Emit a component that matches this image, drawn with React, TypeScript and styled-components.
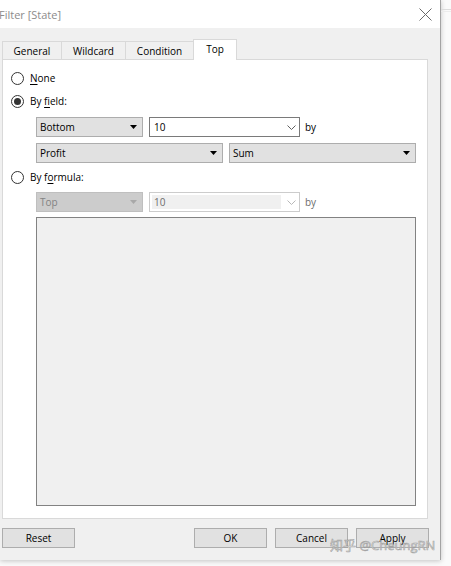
import { FC, ReactNode } from "react";
import styled, { createGlobalStyle, css } from "styled-components";

const GlobalStyle = createGlobalStyle`
  html, body {
    margin: 0;
    padding: 0;
  }
  body {
    background: #fafafa;
    font-family: "Open Sans", "Noto Sans", sans-serif;
    color: #000;
  }
`;

const Page = styled.div`
  position: relative;
  width: 451px;
  height: 566px;
  overflow: hidden;
  display: flex;
  flex-direction: row;
  align-items: flex-start;
`;

const Dialog = styled.div`
  box-sizing: border-box;
  width: 441px;
  height: 560px;
  display: flex;
  flex-direction: column;
  background: #f0f0f0;
  border-right: 1px solid #a3a3a3;
  box-shadow: 0 1px 5px rgba(0, 0, 0, 0.22);
  flex-shrink: 0;
`;

const Backdrop = styled.div`
  flex: 1;
  height: 100%;
  display: flex;
  flex-direction: column;
`;

const BackdropRule = styled.div`
  margin-top: 9px;
  height: 1px;
  border-top: 1px solid #dcdcdc;
  border-bottom: 1px solid #ececec;
`;

const TitleBar = styled.div`
  height: 28px;
  background: #fff;
  display: flex;
  align-items: center;
  justify-content: space-between;
  padding-right: 8px;
`;

const Title = styled.div`
  font-size: 11px;
  color: #8c8c8c;
  margin-left: -1px;
`;

const Body = styled.div`
  flex: 1;
  display: flex;
  flex-direction: column;
  padding: 11px 11px 0 2px;
`;

const TabStrip = styled.div`
  display: flex;
  align-items: flex-end;
  height: 21px;
  margin-bottom: -1px;
  position: relative;
  z-index: 1;
`;

const Tab = styled.div<{ active?: boolean; w: number }>`
  box-sizing: border-box;
  width: ${(p) => p.w}px;
  height: 19px;
  margin-left: -1px;
  display: flex;
  align-items: center;
  justify-content: center;
  font-size: 10px;
  background: #f0f0f0;
  border: 1px solid #d9d9d9;
  &:first-child {
    margin-left: 0;
  }
  ${(p) =>
    p.active &&
    css`
      height: 21px;
      background: #fff;
      border-bottom: none;
      padding-bottom: 2px;
      position: relative;
      z-index: 2;
    `}
`;

const Panel = styled.div`
  box-sizing: border-box;
  width: 426px;
  height: 460px;
  background: #fff;
  border: 1px solid #d9d9d9;
  padding: 10px 0 0 8px;
  display: flex;
  flex-direction: column;
`;

const RadioRow = styled.div<{ top: number }>`
  display: flex;
  align-items: center;
  gap: 6px;
  height: 16px;
  margin-top: ${(p) => p.top}px;
  font-size: 10px;
`;

const RadioCircle = styled.div<{ checked?: boolean }>`
  box-sizing: border-box;
  width: 13px;
  height: 13px;
  border-radius: 50%;
  border: 1px solid #333;
  background: #fff;
  display: flex;
  align-items: center;
  justify-content: center;
  &::after {
    content: "";
    width: 7px;
    height: 7px;
    border-radius: 50%;
    background: ${(p) => (p.checked ? "#333" : "transparent")};
  }
`;

const Key = styled.span`
  text-decoration: underline;
  text-underline-offset: 2px;
`;

const Indent = styled.div<{ top: number }>`
  margin-left: 25px;
  margin-top: ${(p) => p.top}px;
  display: flex;
  align-items: center;
  gap: 6px;
`;

const Combo = styled.div<{ w: number; disabled?: boolean }>`
  box-sizing: border-box;
  width: ${(p) => p.w}px;
  height: 20px;
  background: #e1e1e1;
  border: 1px solid #adadad;
  display: flex;
  align-items: center;
  justify-content: space-between;
  padding: 0 5px 0 3px;
  font-size: 10px;
  color: #000;
  ${(p) =>
    p.disabled &&
    css`
      background: #cccccc;
      border-color: #bfbfbf;
      color: #838383;
    `}
`;

const Edit = styled.div<{ w: number; disabled?: boolean }>`
  box-sizing: border-box;
  width: ${(p) => p.w}px;
  height: 20px;
  background: #fff;
  border: 1px solid ${(p) => (p.disabled ? "#cccccc" : "#7a7a7a")};
  display: flex;
  align-items: center;
  padding: 0 3px 0 2px;
  font-size: 10px;
  gap: 6px;
`;

const EditText = styled.div<{ disabled?: boolean }>`
  flex: 1;
  height: 14px;
  line-height: 14px;
  padding-left: 2px;
  background: ${(p) => (p.disabled ? "#f0f0f0" : "transparent")};
  color: ${(p) => (p.disabled ? "#6d6d6d" : "#000")};
`;

const By = styled.div<{ disabled?: boolean }>`
  font-size: 10px;
  margin-left: -1px;
  color: ${(p) => (p.disabled ? "#6d6d6d" : "#000")};
`;

const ListBox = styled.div`
  box-sizing: border-box;
  margin: 5px 0 0 25px;
  width: 380px;
  height: 289px;
  background: #f0f0f0;
  border: 1px solid #828282;
`;

const ButtonRow = styled.div`
  display: flex;
  align-items: center;
  gap: 8px;
  margin-top: 9px;
`;

const Spacer = styled.div`
  flex: 1;
`;

const Button = styled.div`
  box-sizing: border-box;
  width: 73px;
  height: 20px;
  background: #e1e1e1;
  border: 1px solid #adadad;
  display: flex;
  align-items: center;
  justify-content: center;
  font-size: 10px;
`;

const Watermark = styled.div`
  position: absolute;
  left: 330px;
  top: 535px;
  font-size: 13px;
  font-family: "Open Sans", "Noto Sans CJK SC", sans-serif;
  color: rgba(236, 236, 236, 0.9);
  -webkit-text-stroke: 0.6px rgba(130, 130, 130, 0.7);
  white-space: nowrap;
  pointer-events: none;
`;

const CloseIcon: FC = () => (
  <svg width="13" height="13" viewBox="0 0 13 13">
    <path d="M0.5 0.5 L12.5 12.5 M12.5 0.5 L0.5 12.5" stroke="#6a6a6a" strokeWidth="1" fill="none" />
  </svg>
);

const Triangle: FC<{ color?: string }> = ({ color = "#000" }) => (
  <svg width="7" height="4" viewBox="0 0 7 4">
    <path d="M0 0 H7 L3.5 4 Z" fill={color} />
  </svg>
);

const Chevron: FC<{ color?: string }> = ({ color = "#606060" }) => (
  <svg width="9" height="5" viewBox="0 0 9 5">
    <path d="M0.5 0.5 L4.5 4.5 L8.5 0.5" stroke={color} strokeWidth="1" fill="none" />
  </svg>
);

const Radio: FC<{ checked?: boolean; top: number; children: ReactNode }> = ({
  checked,
  top,
  children,
}) => (
  <RadioRow top={top}>
    <RadioCircle checked={checked} />
    <span>{children}</span>
  </RadioRow>
);

const tabs = [
  { label: "General", w: 60 },
  { label: "Wildcard", w: 65 },
  { label: "Condition", w: 69 },
  { label: "Top", w: 44, active: true },
];

export default function App() {
  return (
    <Page>
      <GlobalStyle />
      <Dialog>
        <TitleBar>
          <Title>Filter [State]</Title>
          <CloseIcon />
        </TitleBar>
        <Body>
          <TabStrip>
            {tabs.map((t) => (
              <Tab key={t.label} w={t.w} active={t.active}>
                {t.label}
              </Tab>
            ))}
          </TabStrip>
          <Panel>
            <Radio top={0}>
              <Key>N</Key>one
            </Radio>
            <Radio top={7} checked>
              By <Key>f</Key>ield:
            </Radio>
            <Indent top={8}>
              <Combo w={107}>
                Bottom <Triangle />
              </Combo>
              <Edit w={151}>
                <EditText>10</EditText>
                <Chevron />
              </Edit>
              <By>by</By>
            </Indent>
            <Indent top={6}>
              <Combo w={187}>
                Profit <Triangle />
              </Combo>
              <Combo w={187}>
                Sum <Triangle />
              </Combo>
            </Indent>
            <Radio top={6}>
              By f<Key>o</Key>rmula:
            </Radio>
            <Indent top={7}>
              <Combo w={107} disabled>
                Top <Triangle color="#a8a8a8" />
              </Combo>
              <Edit w={151} disabled>
                <EditText disabled>10</EditText>
                <Chevron color="#b8b8b8" />
              </Edit>
              <By disabled>by</By>
            </Indent>
            <ListBox />
          </Panel>
          <ButtonRow>
            <Button>Reset</Button>
            <Spacer />
            <Button>OK</Button>
            <Button>Cancel</Button>
            <Button>Apply</Button>
          </ButtonRow>
        </Body>
      </Dialog>
      <Backdrop>
        <BackdropRule />
      </Backdrop>
      <Watermark>知乎 @CheungRN</Watermark>
    </Page>
  );
}
